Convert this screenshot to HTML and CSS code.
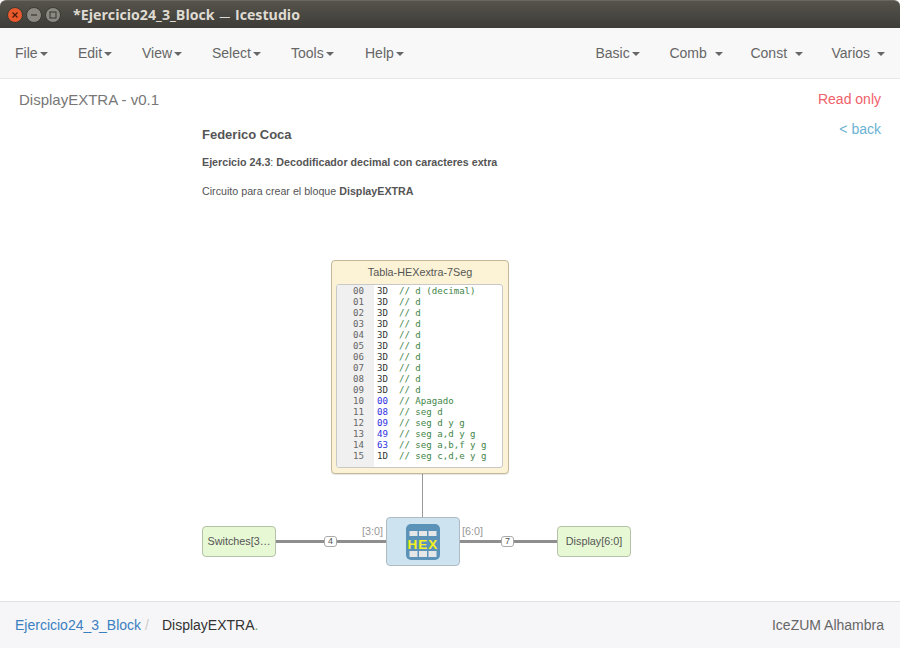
FILE: index.html
```html
<!DOCTYPE html>
<html lang="en">
<head>
  <meta charset="UTF-8">
  <title>Icestudio</title>
  <link rel="stylesheet" href="styles.css">
</head>
<body>
  <div class="titlebar">
    <div class="winbtns">
      <span class="winbtn close">
        <svg width="8" height="8" viewBox="0 0 8 8"><path d="M1.5 1.5l5 5M6.5 1.5l-5 5" stroke="#4a1c0c" stroke-width="1.3"/></svg>
      </span>
      <span class="winbtn">
        <svg width="8" height="8" viewBox="0 0 8 8"><path d="M1 4h6" stroke="#3c3b37" stroke-width="1.3"/></svg>
      </span>
      <span class="winbtn">
        <svg width="8" height="8" viewBox="0 0 8 8"><rect x="1" y="1" width="6" height="6" fill="none" stroke="#3c3b37" stroke-width="1.1"/></svg>
      </span>
    </div>
    <span class="wintitle">*Ejercicio24_3_Block <span class="dash">—</span> Icestudio</span>
  </div>

  <nav class="navbar">
    <ul class="menu">
      <li class="w-file">File<b class="caret"></b></li>
      <li class="w-edit">Edit<b class="caret"></b></li>
      <li class="w-view">View<b class="caret"></b></li>
      <li class="w-select">Select<b class="caret"></b></li>
      <li class="w-tools">Tools<b class="caret"></b></li>
      <li>Help<b class="caret"></b></li>
    </ul>
    <ul class="menu right">
      <li class="w-basic">Basic<b class="caret"></b></li>
      <li class="w-comb">Comb <b class="caret wide"></b></li>
      <li class="w-const">Const <b class="caret wide"></b></li>
      <li>Varios <b class="caret last"></b></li>
    </ul>
  </nav>

  <main class="canvas">
    <div class="version">DisplayEXTRA - v0.1</div>
    <div class="readonly">Read only</div>
    <a class="back">&lt; back</a>

    <div class="info">
      <h4>Federico Coca</h4>
      <p class="sub"><strong>Ejercicio 24.3</strong>: <strong>Decodificador decimal con caracteres extra</strong></p>
      <p class="desc">Circuito para crear el bloque <strong>DisplayEXTRA</strong></p>
    </div>

    <!-- wires -->
    <div class="wire thin"></div>
    <div class="wire bus bus-in"></div>
    <div class="wire bus bus-out"></div>
    <span class="size size-in">4</span>
    <span class="size size-out">7</span>
    <span class="port port-in">[3:0]</span>
    <span class="port port-out">[6:0]</span>

    <div class="block memory">
      <div class="memory-title">Tabla-HEXextra-7Seg</div>
      <div class="editor">
        <div class="gutter">00<br>01<br>02<br>03<br>04<br>05<br>06<br>07<br>08<br>09<br>10<br>11<br>12<br>13<br>14<br>15</div>
        <pre class="code">3D  <i>// d (decimal)</i>
3D  <i>// d</i>
3D  <i>// d</i>
3D  <i>// d</i>
3D  <i>// d</i>
3D  <i>// d</i>
3D  <i>// d</i>
3D  <i>// d</i>
3D  <i>// d</i>
3D  <i>// d</i>
<u>00</u>  <i>// Apagado</i>
<u>08</u>  <i>// seg d</i>
<u>09</u>  <i>// seg d y g</i>
<u>49</u>  <i>// seg a,d y g</i>
<u>63</u>  <i>// seg a,b,f y g</i>
1D  <i>// seg c,d,e y g</i></pre>
      </div>
    </div>

    <div class="block pin pin-in">Switches[3…</div>
    <div class="block pin pin-out">Display[6:0]</div>

    <div class="block hex">
      <svg width="34" height="36" viewBox="0 0 34 36">
        <rect width="34" height="36" rx="5" fill="#5b92b8"/>
        <g fill="#e4e6e8">
          <rect x="3.5" y="7" width="8" height="5"/><rect x="13" y="7" width="8" height="5"/><rect x="22.5" y="7" width="8" height="5"/>
          <rect x="3.5" y="27" width="8" height="6"/><rect x="13" y="27" width="8" height="6"/><rect x="22.5" y="27" width="8" height="6"/>
        </g>
        <text x="17" y="25" class="hex-text" text-anchor="middle">HEX</text>
      </svg>
    </div>
  </main>

  <footer class="footer">
    <div class="crumbs">
      <a>Ejercicio24_3_Block</a><span class="sep">/</span><span class="current">DisplayEXTRA</span><span class="dot">.</span>
    </div>
    <div class="board">IceZUM Alhambra</div>
  </footer>
</body>
</html>
```

FILE: styles.css
```css
html, body {
  margin: 0;
  height: 100%;
  overflow: hidden;
}
body {
  display: flex;
  flex-direction: column;
  height: 648px;
  background: #fff;
  font-family: "Liberation Sans", Arial, sans-serif;
  color: #555;
}

/* window title */
.titlebar {
  height: 28px;
  flex: none;
  display: flex;
  align-items: center;
  box-sizing: border-box;
  padding-left: 7px;
  background: linear-gradient(#56534c, #3d3c37);
  border-top: 1px solid #6a675f;
  border-radius: 6px 6px 0 0;
}
.winbtns {
  display: flex;
  gap: 3px;
}
.winbtn {
  width: 14px;
  height: 14px;
  border-radius: 50%;
  background: #8b8982;
  border: 1px solid #3a3934;
  display: flex;
  align-items: center;
  justify-content: center;
}
.winbtn.close {
  background: #e8592c;
}
.wintitle {
  margin-left: 12px;
  font: bold 14.2px "Open Sans", "Noto Sans", sans-serif;
  color: #dfdbd2;
}
.dash {
  font-size: 11px;
  font-weight: normal;
  margin: 0 1px;
}

/* navbar */
.navbar {
  height: 51px;
  flex: none;
  box-sizing: border-box;
  display: flex;
  justify-content: space-between;
  background: #f8f8f8;
  border-bottom: 1px solid #e7e7e7;
}
.menu {
  list-style: none;
  margin: 0;
  padding: 0 0 0 15px;
  display: flex;
  font-size: 14px;
  line-height: 50px;
  color: #666;
}
.menu.right {
  padding: 0 15px 0 0;
}
.menu li {
  white-space: nowrap;
}
.w-file { width: 63px; }
.w-edit { width: 64px; }
.w-view { width: 70px; }
.w-select { width: 79px; }
.w-tools { width: 74px; }
.w-basic { width: 74px; }
.w-comb { width: 81px; }
.w-const { width: 81px; }
.caret {
  display: inline-block;
  width: 0;
  height: 0;
  margin-left: 2px;
  vertical-align: middle;
  border-top: 4px solid #666;
  border-left: 4px solid transparent;
  border-right: 4px solid transparent;
}
.caret.wide {
  margin-left: 4px;
}
.caret.last {
  margin-left: 3px;
}

/* canvas */
.canvas {
  flex: 1;
  position: relative;
  background: #fff;
}
.version {
  position: absolute;
  left: 19px;
  top: 12px;
  font-size: 15px;
  color: #777;
}
.readonly {
  position: absolute;
  right: 19px;
  top: 12px;
  font-size: 14px;
  color: #f0616a;
}
.back {
  position: absolute;
  right: 19px;
  top: 42px;
  font-size: 14px;
  color: #6cb2d4;
}
.info {
  position: absolute;
  left: 202px;
  top: 48px;
  color: #555;
}
.info h4 {
  margin: 0;
  font-size: 13px;
  line-height: 16px;
}
.info p {
  margin: 0;
  font-size: 10.7px;
  line-height: 12px;
}
.info .sub {
  margin-top: 13px;
}
.info .desc {
  margin-top: 17px;
}

/* blocks */
.block {
  position: absolute;
  box-sizing: border-box;
  border: 1px solid #bbb;
  border-radius: 4px;
}
.memory {
  left: 331px;
  top: 181px;
  width: 178px;
  height: 214px;
  background: #fcf3d6;
  border-color: #c4b898;
  box-shadow: 0 1px 1px rgba(0, 0, 0, 0.1);
}
.memory-title {
  text-align: center;
  font-size: 10.8px;
  line-height: 13px;
  margin-top: 5px;
  color: #555;
}
.editor {
  position: absolute;
  left: 4px;
  top: 23px;
  width: 167px;
  height: 184px;
  box-sizing: border-box;
  display: flex;
  background: #fff;
  border: 1px solid #c8c8c8;
  border-radius: 3px;
  overflow: hidden;
  font: 9.1px/11px "DejaVu Sans Mono", monospace;
}
.gutter {
  width: 37px;
  box-sizing: border-box;
  padding: 1px 10px 0 0;
  text-align: right;
  background: #f0f0f0;
  color: #666;
  flex: none;
}
.code {
  margin: 0;
  padding: 1px 0 0 3px;
  font: inherit;
  color: #333;
}
.code i {
  font-style: normal;
  color: #3f8548;
}
.code u {
  text-decoration: none;
  color: #3030e0;
}

.pin {
  top: 447px;
  height: 31px;
  background: #e7f8d4;
  border-color: #b5c2a8;
  font-size: 10.8px;
  line-height: 29px;
  text-align: center;
  color: #555;
}
.pin-in { left: 202px; width: 74px; }
.pin-out { left: 557px; width: 74px; }

.hex {
  left: 386px;
  top: 438px;
  width: 74px;
  height: 49px;
  background: #cde4f0;
  border-color: #aebbc4;
  display: flex;
  align-items: center;
  justify-content: center;
}
.hex-text {
  font: bold 13.5px "Liberation Sans", sans-serif;
  fill: #f6f01e;
  letter-spacing: 1px;
}

/* wires */
.wire {
  position: absolute;
  background: #8e8e8e;
}
.wire.thin {
  left: 422px;
  top: 395px;
  width: 1px;
  height: 44px;
  background: #999;
}
.wire.bus {
  top: 461px;
  height: 3px;
}
.bus-in { left: 275px; width: 112px; }
.bus-out { left: 459px; width: 99px; }
.size {
  position: absolute;
  top: 457px;
  box-sizing: border-box;
  width: 13px;
  height: 11px;
  border: 1px solid #aaa;
  border-radius: 3px;
  background: #fff;
  font-size: 9px;
  line-height: 9px;
  text-align: center;
  color: #555;
}
.size-in { left: 324px; }
.size-out { left: 501px; }
.port {
  position: absolute;
  top: 446px;
  font-size: 10.8px;
  line-height: 12px;
  color: #999;
}
.port-in { left: 362px; }
.port-out { left: 462px; }

/* footer */
.footer {
  height: 47px;
  flex: none;
  box-sizing: border-box;
  display: flex;
  justify-content: space-between;
  padding: 0 16px 0 15px;
  font-size: 14px;
  line-height: 46px;
  background: #f6f6f8;
  border-top: 1px solid #e0e0e4;
}
.crumbs a {
  color: #3a80c0;
}
.sep {
  color: #ccc;
  margin: 0 13px 0 4px;
}
.current {
  color: #333;
}
.dot {
  color: #6a6;
}
.board {
  color: #666;
}
```
